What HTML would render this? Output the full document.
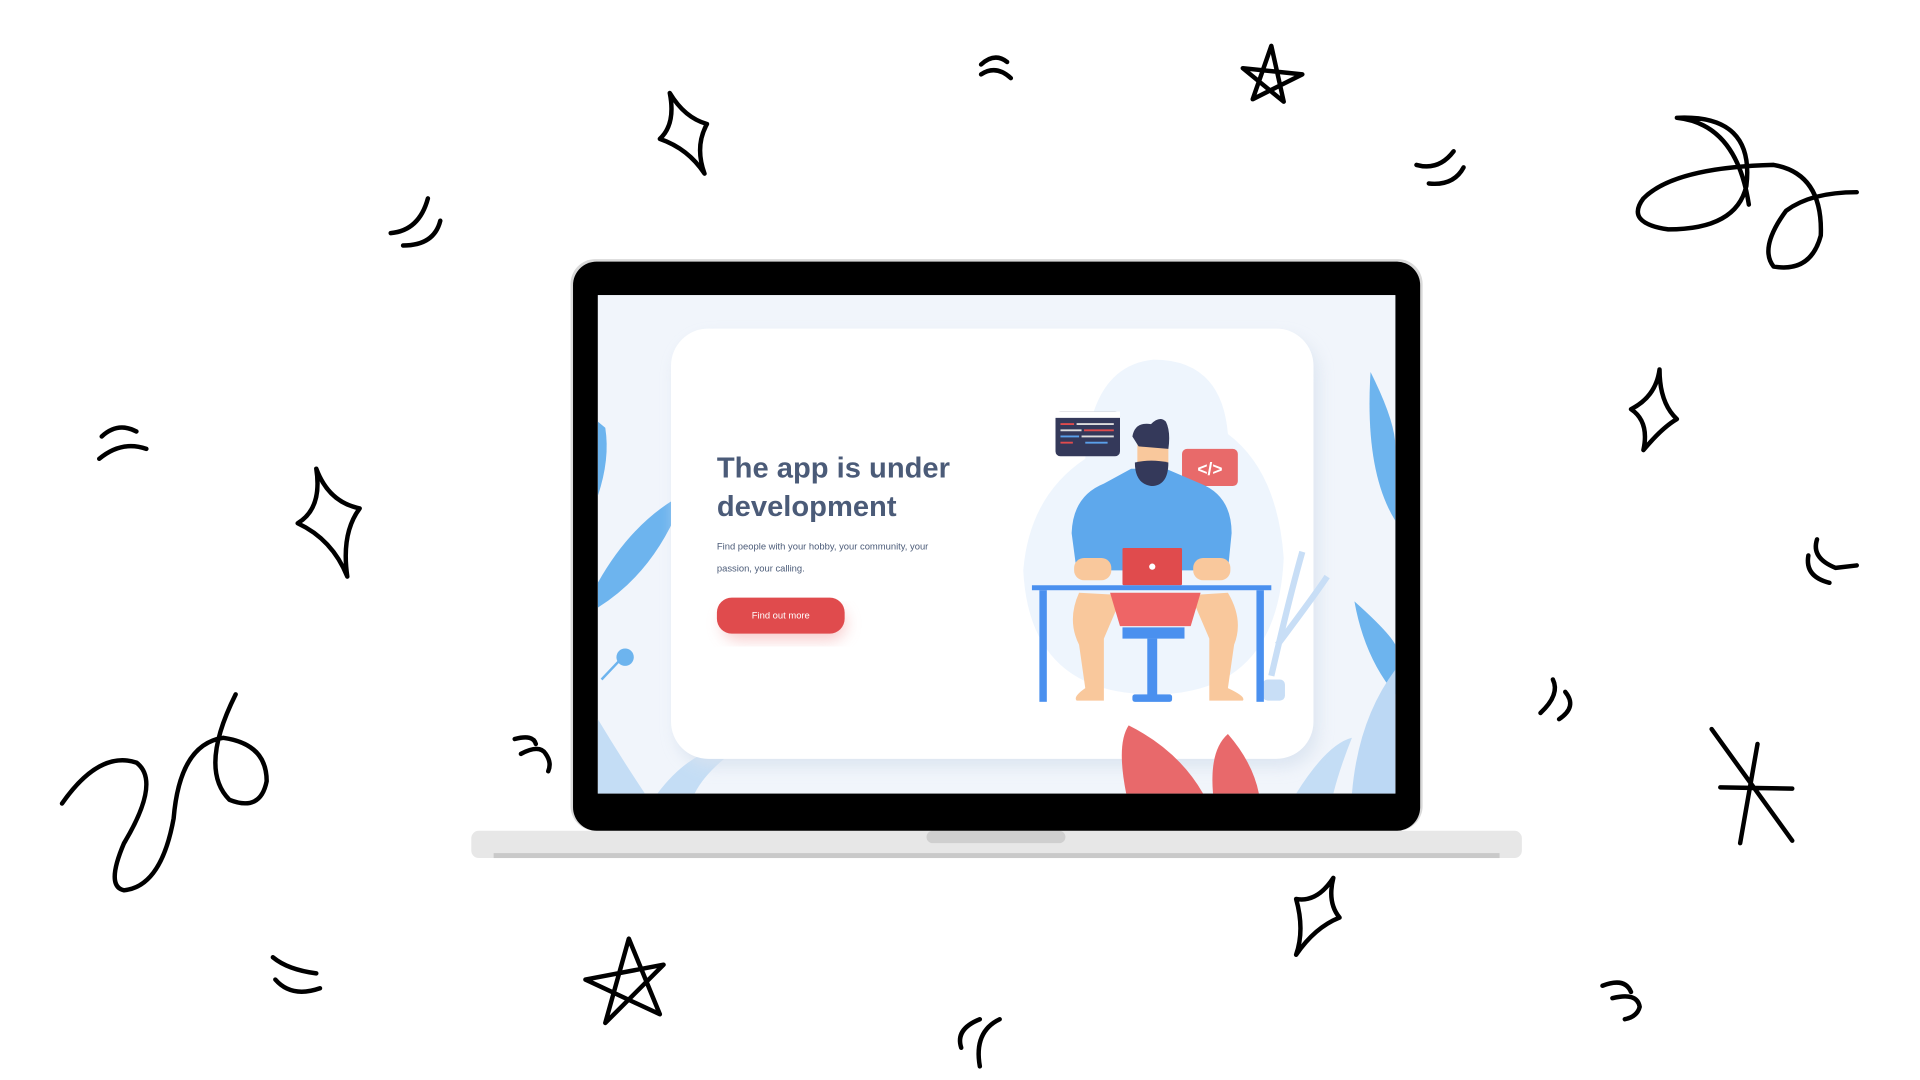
<!DOCTYPE html>
<html><head><meta charset="utf-8"><style>html,body{margin:0;padding:0;background:#fff;overflow:hidden}svg{display:block}</style></head>
<body>
<svg width="1920" height="1080" viewBox="0 0 1548 871" preserveAspectRatio="none" xmlns="http://www.w3.org/2000/svg">
<defs>
<filter id="sh" x="-20%" y="-20%" width="140%" height="140%"><feGaussianBlur stdDeviation="6"/></filter>
<clipPath id="scr"><rect x="482" y="238" width="643" height="402"/></clipPath>
</defs>
<!-- doodles -->
<g fill="none" stroke="#000" stroke-width="3.6" stroke-linecap="round" stroke-linejoin="round">
<path d="M540 75 Q545 100 532 112 Q555 120 568 140 Q560 118 570 100 Q552 95 540 75Z"/>
<path d="M791 52 Q802 42 812 50 M791 60 Q803 52 815 63"/>
<path d="M1010 80 L1025 37 L1035 82 L1002 55 L1050 60 Z"/>
<path d="M1142 133 Q1160 138 1172 122 M1152 148 Q1172 150 1180 135"/>
<path d="M1410 165 Q1400 100 1352 95 Q1415 92 1408 150 Q1400 185 1345 185 Q1310 180 1325 160 Q1350 135 1430 133 Q1470 140 1468 190 Q1460 220 1430 215 Q1418 200 1440 170 Q1460 155 1497 155"/>
<path d="M315 188 Q338 186 345 160 M325 198 Q350 198 355 178"/>
<path d="M82 352 Q95 340 110 348 M80 370 Q98 355 118 362"/>
<path d="M255 378 Q260 410 240 422 Q268 435 280 465 Q275 430 290 410 Q265 405 255 378Z"/>
<path d="M1338 298 Q1335 320 1315 330 Q1330 340 1325 363 Q1340 345 1352 338 Q1338 325 1338 298Z"/>
<path d="M1465 435 Q1460 450 1480 458 L1497 456 M1458 448 Q1455 465 1475 470"/>
<path d="M50 648 Q80 605 110 615 Q130 630 100 680 Q85 715 100 718 Q130 715 140 660 Q145 600 180 595 Q215 600 215 630 Q210 655 185 645 Q160 620 190 560"/>
<path d="M415 596 Q430 592 432 600 M420 608 Q435 600 440 608 Q445 615 442 622"/>
<path d="M1252 548 Q1258 560 1242 575 M1262 558 Q1272 570 1257 580"/>
<path d="M1380 588 L1445 678 M1417 600 L1403 680 M1387 635 L1445 636"/>
<path d="M1075 708 Q1062 728 1045 725 Q1052 750 1045 770 Q1060 748 1080 740 Q1070 728 1075 708Z"/>
<path d="M220 772 Q232 782 255 785 M222 790 Q235 805 258 797"/>
<path d="M488 825 L507 757 L532 818 L472 790 L535 778 Z"/>
<path d="M790 822 Q770 830 775 845 M806 822 Q785 832 790 860"/>
<path d="M1292 795 Q1310 788 1315 800 M1300 805 Q1320 800 1322 812 Q1320 820 1310 822"/>
</g>
<!-- laptop base -->
<rect x="380" y="670" width="847" height="22" rx="6" fill="#e7e7e7"/>
<rect x="398" y="688" width="811" height="4" fill="#c9c9c9"/>
<rect x="747" y="670" width="112" height="10" rx="5" fill="#cfcfcf"/>
<!-- bezel -->
<rect x="460" y="209" width="687" height="461" rx="20" fill="#d9d9d9"/>
<rect x="462" y="211" width="683" height="459" rx="19" fill="#000"/>
<rect x="482" y="238" width="643" height="402" fill="#eef3fa"/>
<g clip-path="url(#scr)">
<rect x="482" y="238" width="643" height="402" fill="#f1f5fb"/>
<!-- leaves -->
<path d="M482 490 Q530 460 552 398 Q510 420 482 470Z" fill="#6db4ee"/>
<path d="M482 400 Q492 370 488 345 L482 340Z" fill="#6db4ee"/>
<circle cx="504" cy="530" r="7" fill="#6db4ee"/>
<path d="M485 548 L502 530" stroke="#6db4ee" stroke-width="2"/>
<path d="M1125 420 Q1100 380 1105 300 Q1125 340 1125 360Z" fill="#6db4ee"/>
<path d="M1125 560 Q1100 530 1092 485 Q1120 510 1125 520Z" fill="#6db4ee"/>
<path d="M1090 640 Q1095 580 1125 540 L1125 640Z" fill="#bcd8f4"/>
<path d="M482 640 L482 580 Q500 610 520 640Z" fill="#c4ddf5"/>
<path d="M530 640 Q560 600 600 600 Q570 620 560 640Z" fill="#c4ddf5"/>
<path d="M1045 640 Q1070 600 1090 595 Q1080 620 1075 640Z" fill="#c4ddf5"/>
<!-- card -->
<rect x="545" y="272" width="518" height="347" rx="30" fill="#d8e2ef" filter="url(#sh)" opacity="0.8"/>
<rect x="541" y="265" width="518" height="347" rx="30" fill="#fff"/>
<path d="M908 640 Q900 600 910 585 Q950 605 970 640Z" fill="#e8696b"/>
<path d="M978 640 Q975 605 990 592 Q1010 615 1015 640Z" fill="#e8696b"/>
<!-- text -->
<text x="578" y="385" font-family="Liberation Sans, sans-serif" font-weight="bold" font-size="23.5" fill="#4b5b78">The app is under</text>
<text x="578" y="416" font-family="Liberation Sans, sans-serif" font-weight="bold" font-size="23.5" fill="#4b5b78">development</text>
<text x="578" y="443" font-family="Liberation Sans, sans-serif" font-size="7.6" fill="#4b5b78">Find people with your hobby, your community, your</text>
<text x="578" y="461" font-family="Liberation Sans, sans-serif" font-size="7.6" fill="#4b5b78">passion, your calling.</text>
<rect x="582" y="490" width="100" height="26" rx="13" fill="#f2a8a8" filter="url(#sh)" opacity="0.6"/>
<rect x="578" y="482" width="103" height="29" rx="12" fill="#e04b4d"/>
<text x="629.5" y="499" text-anchor="middle" font-family="Liberation Sans, sans-serif" font-size="7.6" fill="#fff">Find out more</text>
<!-- illustration -->
<path d="M930 290 Q985 290 990 350 Q1030 380 1035 450 Q1030 560 930 560 Q830 560 825 460 Q830 400 875 370 Q880 295 930 290Z" fill="#eef5fd"/>
<path d="M1025 545 Q1040 480 1050 445 M1030 520 Q1060 480 1070 465" stroke="#c8def6" stroke-width="5" fill="none"/>
<rect x="1018" y="548" width="18" height="17" rx="4" fill="#c8def6"/>
<rect x="851" y="332" width="52" height="36" rx="4" fill="#34395a"/>
<rect x="851" y="332" width="52" height="5" fill="#fff"/>
<g stroke-width="1.5"><line x1="855" y1="342" x2="866" y2="342" stroke="#e04b4d"/><line x1="868" y1="342" x2="898" y2="342" stroke="#ddd"/><line x1="855" y1="347" x2="872" y2="347" stroke="#ddd"/><line x1="874" y1="347" x2="898" y2="347" stroke="#e04b4d"/><line x1="855" y1="352" x2="870" y2="352" stroke="#5aa0ea"/><line x1="872" y1="352" x2="898" y2="352" stroke="#ddd"/><line x1="855" y1="357" x2="865" y2="357" stroke="#e04b4d"/><line x1="875" y1="357" x2="893" y2="357" stroke="#5aa0ea"/></g>
<rect x="953" y="362" width="45" height="30" rx="4" fill="#e86a6a"/>
<text x="975.5" y="383" text-anchor="middle" font-family="Liberation Sans, sans-serif" font-weight="bold" font-size="14" fill="#fff">&lt;/&gt;</text>
<!-- legs -->
<path d="M870 478 Q860 500 870 520 L875 555 Q865 562 868 565 L890 565 L890 515 L905 480Z" fill="#f9c89c"/>
<path d="M990 478 Q1003 500 995 520 L990 555 Q1005 562 1002 565 L975 565 L975 515 L960 480Z" fill="#f9c89c"/>
<!-- shirt -->
<path d="M890 390 L912 378 L940 378 L968 390 Q993 400 993 430 L990 460 L868 460 L864 430 Q865 400 890 390Z" fill="#5ea8ec"/>
<rect x="866" y="450" width="30" height="18" rx="8" fill="#f9c89c"/>
<rect x="962" y="450" width="30" height="18" rx="8" fill="#f9c89c"/>
<!-- head -->
<rect x="917" y="352" width="25" height="26" rx="6" fill="#f9c89c"/>
<path d="M913 352 Q915 340 928 342 Q935 335 940 340 Q944 348 942 362 L918 360Z" fill="#34395a"/>
<path d="M915 373 Q928 370 942 373 Q942 392 928 392 Q915 390 915 373Z" fill="#34395a"/>
<rect x="905" y="442" width="48" height="30" rx="1" fill="#e04b4d"/>
<circle cx="929" cy="457" r="2.5" fill="#fff"/>
<!-- shorts -->
<path d="M895 478 L968 478 L960 505 L903 505Z" fill="#ee6566"/>
<path d="M905 506 L955 506 L955 515 L905 515Z" fill="#4a90ef"/>
<rect x="925" y="515" width="8" height="48" fill="#4a90ef"/>
<rect x="913" y="560" width="32" height="6" rx="2" fill="#4a90ef"/>
<!-- desk -->
<rect x="832" y="472" width="193" height="4" fill="#4a90ef"/>
<rect x="838" y="476" width="6" height="90" fill="#4a90ef"/>
<rect x="1013" y="476" width="6" height="90" fill="#4a90ef"/>
</g>
</svg>
</body></html>
